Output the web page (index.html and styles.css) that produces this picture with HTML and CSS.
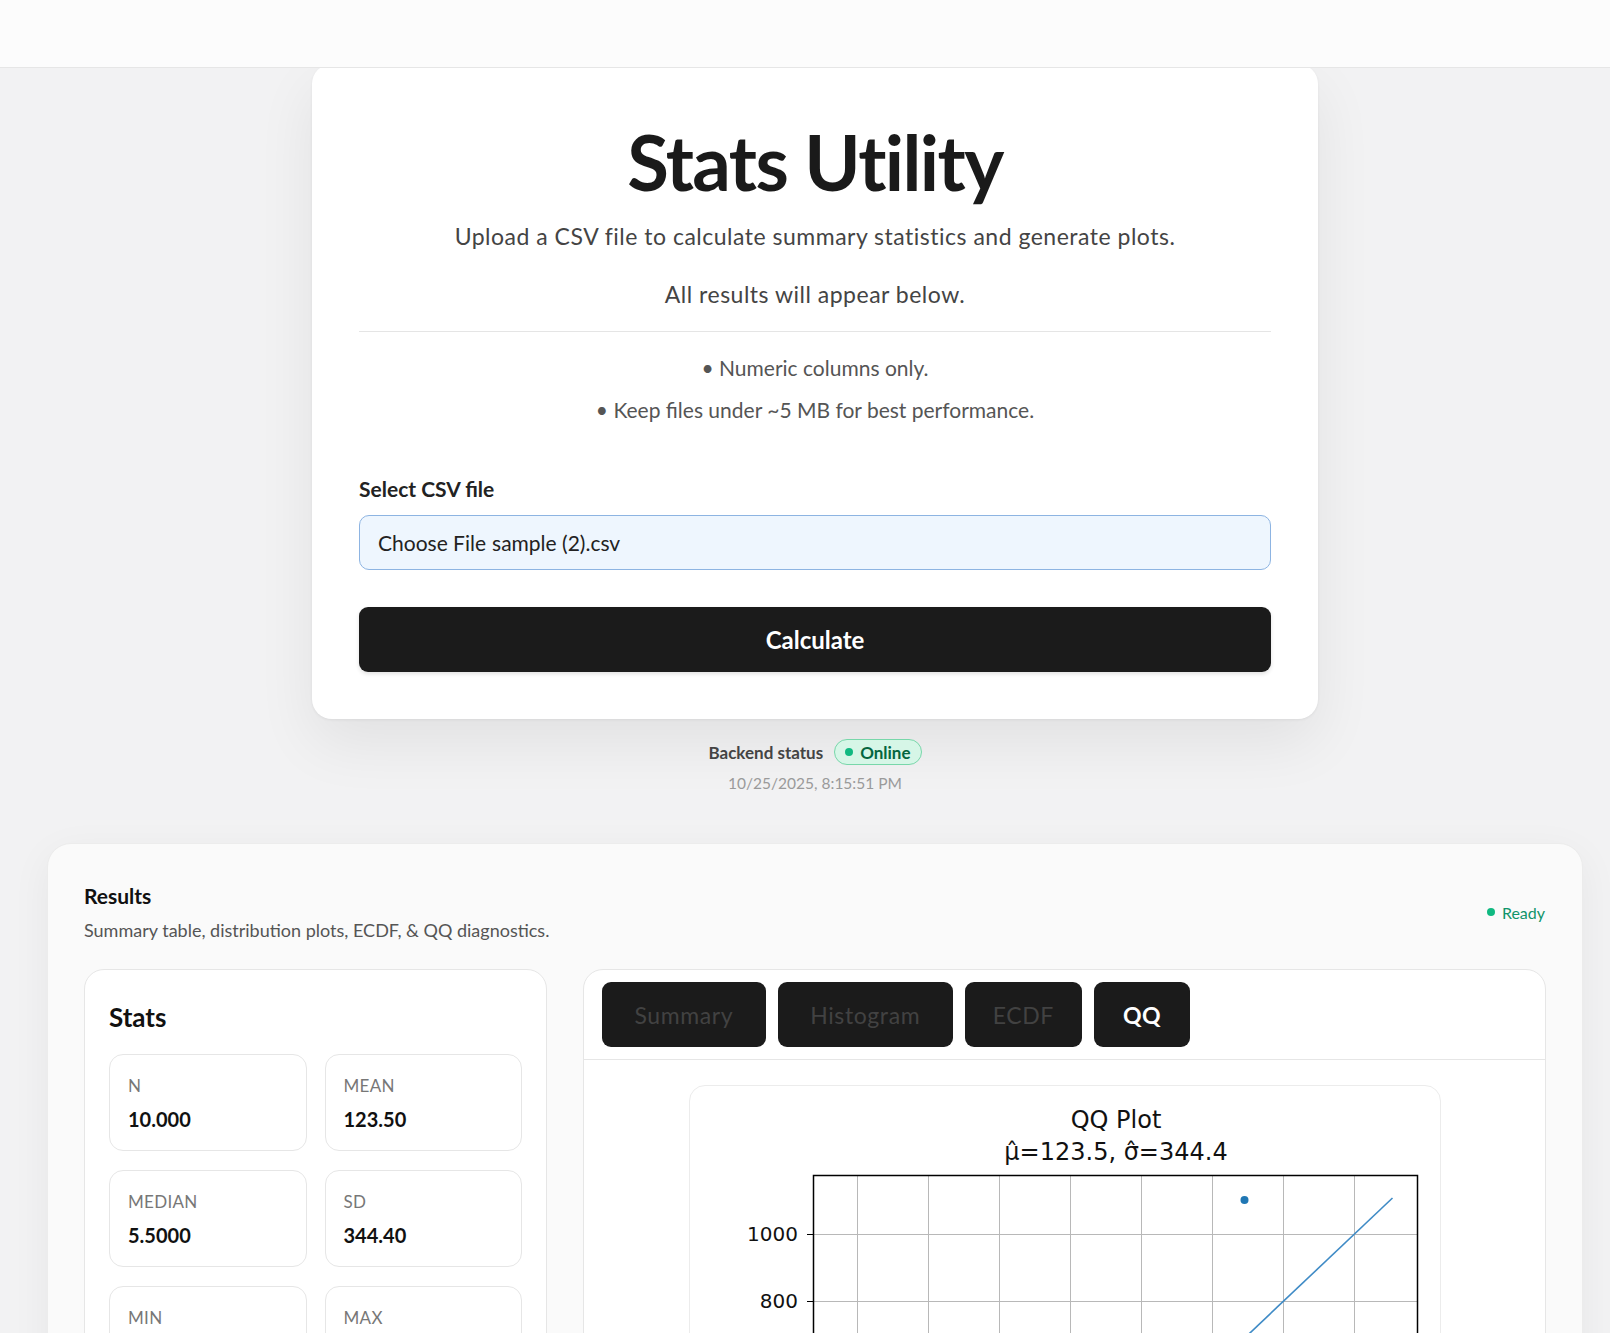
FILE: index.html
```html
<!DOCTYPE html>
<html lang="en">
<head>
<meta charset="utf-8">
<title>Stats Utility</title>
<link rel="stylesheet" href="styles.css">
</head>
<body>
<header class="topbar"></header>
<main class="page">
  <section class="hero-card">
    <h1 class="hero-title">Stats Utility</h1>
    <p class="hero-sub">Upload a CSV file to calculate summary statistics and generate plots.</p>
    <p class="hero-sub hero-sub-last">All results will appear below.</p>
    <hr class="divider">
    <ul class="notes">
      <li>• Numeric columns only.</li>
      <li>• Keep files under ~5 MB for best performance.</li>
    </ul>
    <div class="field">
      <label class="field-label">Select CSV file</label>
      <div class="file-input"><span class="file-btn">Choose File</span><span class="file-name">sample (2).csv</span></div>
    </div>
    <button class="calc-btn" type="button">Calculate</button>
  </section>

  <div class="status">
    <div class="status-row">
      <span class="status-label">Backend status</span>
      <span class="pill"><span class="dot"></span>Online</span>
    </div>
    <div class="status-time">10/25/2025, 8:15:51 PM</div>
  </div>

  <section class="results">
    <div class="results-head">
      <div>
        <h2 class="results-title">Results</h2>
        <p class="results-sub">Summary table, distribution plots, ECDF, &amp; QQ diagnostics.</p>
      </div>
      <div class="ready"><span class="dot"></span>Ready</div>
    </div>

    <div class="results-grid">
      <div class="stats-card">
        <h3 class="stats-title">Stats</h3>
        <div class="tiles">
          <div class="tile"><div class="tile-label">N</div><div class="tile-value">10.000</div></div>
          <div class="tile"><div class="tile-label">Mean</div><div class="tile-value">123.50</div></div>
          <div class="tile"><div class="tile-label">Median</div><div class="tile-value">5.5000</div></div>
          <div class="tile"><div class="tile-label">SD</div><div class="tile-value">344.40</div></div>
          <div class="tile"><div class="tile-label">Min</div><div class="tile-value">1.0000</div></div>
          <div class="tile"><div class="tile-label">Max</div><div class="tile-value">1100.0</div></div>
        </div>
      </div>

      <div class="plot-card">
        <div class="tabs">
          <button class="tab" type="button">Summary</button>
          <button class="tab" type="button">Histogram</button>
          <button class="tab tab-caps" type="button">ECDF</button>
          <button class="tab tab-active" type="button">QQ</button>
        </div>
        <div class="plot-body">
          <div class="plot-frame">
            <svg class="qq" width="750" height="580" viewBox="0 0 750 580">
              <text x="426" y="42" class="mpl-title" text-anchor="middle">QQ Plot</text>
              <text x="426" y="74" class="mpl-title" text-anchor="middle">μ̂=123.5, σ̂=344.4</text>
              <g stroke="#b8b8b8" stroke-width="1">
                <line x1="167.5" y1="89" x2="167.5" y2="505"/>
                <line x1="238.5" y1="89" x2="238.5" y2="505"/>
                <line x1="309.5" y1="89" x2="309.5" y2="505"/>
                <line x1="380.5" y1="89" x2="380.5" y2="505"/>
                <line x1="451.5" y1="89" x2="451.5" y2="505"/>
                <line x1="522.5" y1="89" x2="522.5" y2="505"/>
                <line x1="593.5" y1="89" x2="593.5" y2="505"/>
                <line x1="664.5" y1="89" x2="664.5" y2="505"/>
                <line x1="123" y1="148.5" x2="728" y2="148.5"/>
                <line x1="123" y1="215.5" x2="728" y2="215.5"/>
                <line x1="123" y1="282.5" x2="728" y2="282.5"/>
                <line x1="123" y1="349.5" x2="728" y2="349.5"/>
                <line x1="123" y1="416.5" x2="728" y2="416.5"/>
                <line x1="123" y1="483.5" x2="728" y2="483.5"/>
              </g>
              <g stroke="#000" stroke-width="1">
                <line x1="117" y1="148.5" x2="123" y2="148.5"/>
                <line x1="117" y1="215.5" x2="123" y2="215.5"/>
                <line x1="117" y1="282.5" x2="123" y2="282.5"/>
                <line x1="117" y1="349.5" x2="123" y2="349.5"/>
                <line x1="117" y1="416.5" x2="123" y2="416.5"/>
                <line x1="117" y1="483.5" x2="123" y2="483.5"/>
              </g>
              <g class="mpl-tick" text-anchor="end">
                <text x="108" y="155">1000</text>
                <text x="108" y="222">800</text>
                <text x="108" y="289">600</text>
                <text x="108" y="356">400</text>
                <text x="108" y="423">200</text>
                <text x="108" y="490">0</text>
              </g>
              <line x1="702.5" y1="112" x2="318" y2="476" stroke="#3f8bc6" stroke-width="1.6"/>
              <g fill="#1f77b4">
                <circle cx="554.5" cy="114" r="4"/>
                <circle cx="167.5" cy="483" r="4"/>
                <circle cx="238.5" cy="482" r="4"/>
                <circle cx="280" cy="482" r="4"/>
                <circle cx="320" cy="481" r="4"/>
                <circle cx="360" cy="481" r="4"/>
                <circle cx="400" cy="481" r="4"/>
                <circle cx="440" cy="480" r="4"/>
                <circle cx="480" cy="480" r="4"/>
                <circle cx="520" cy="480" r="4"/>
              </g>
              <rect x="123.5" y="89.5" width="604" height="415" fill="none" stroke="#000" stroke-width="1.5"/>
            </svg>
          </div>
        </div>
      </div>
    </div>
  </section>
</main>
</body>
</html>
```

FILE: styles.css
```css
* { box-sizing: border-box; }
html, body { margin: 0; padding: 0; }
body {
  font-family: Lato, "Noto Sans", "Liberation Sans", sans-serif;
  background: #f2f2f3;
  color: #1a1a1a;
}

.topbar {
  position: sticky;
  top: 0;
  z-index: 10;
  height: 68px;
  background: #fcfcfc;
  border-bottom: 1px solid #e6e6e6;
}

.page {
  padding-left: 20px;
  padding-bottom: 60px;
}

.hero-card {
  width: 1006px;
  margin: -4px auto 0;
  background: #fff;
  border-radius: 20px;
  padding: 48px 47px 47px;
  box-shadow: 0 24px 60px rgba(0, 0, 0, 0.07), 0 1px 3px rgba(0, 0, 0, 0.06);
  text-align: center;
}

.hero-title {
  margin: 0 0 8px;
  font-size: 76px;
  line-height: 100px;
  font-weight: 700;
  color: #1a1a1a;
  letter-spacing: -1.6px;
}

.hero-sub {
  margin: 0 0 25px;
  font-size: 23px;
  line-height: 33px;
  letter-spacing: 0.5px;
  color: #444;
}
.hero-sub-last { margin-bottom: 20px; }

.divider {
  margin: 0;
  border: 0;
  border-top: 1px solid #e5e5e5;
}

.notes {
  list-style: none;
  margin: 21px 0 0;
  padding: 0;
  display: flex;
  flex-direction: column;
  gap: 12px;
  font-size: 21px;
  line-height: 30px;
  color: #555;
}

.field {
  margin-top: 49px;
  text-align: left;
}
.field-label {
  display: block;
  font-size: 21px;
  line-height: 30px;
  font-weight: 700;
  color: #222;
  margin-bottom: 11px;
}
.file-input {
  height: 55px;
  display: flex;
  align-items: center;
  gap: 6px;
  padding: 0 18px;
  background: #eef6fe;
  border: 1px solid #8db4e2;
  border-radius: 10px;
  font-size: 21px;
  color: #222;
}

.calc-btn {
  display: block;
  width: 100%;
  height: 65px;
  margin-top: 37px;
  border: 0;
  border-radius: 9px;
  background: #1b1b1b;
  color: #fff;
  font-family: inherit;
  font-size: 24px;
  font-weight: 700;
  box-shadow: 0 2px 4px rgba(0, 0, 0, 0.12);
}

.status {
  margin-top: 20px;
  display: flex;
  flex-direction: column;
  align-items: center;
  gap: 8px;
}
.status-row {
  display: flex;
  align-items: center;
  gap: 11px;
  height: 26px;
}
.status-label {
  font-size: 17px;
  font-weight: 700;
  color: #444;
}
.pill {
  display: inline-flex;
  align-items: center;
  gap: 7px;
  height: 26px;
  padding: 0 10px;
  border-radius: 13px;
  background: #d6f6e7;
  border: 1px solid #78d7aa;
  color: #05653f;
  font-size: 17px;
  font-weight: 700;
}
.dot {
  width: 8px;
  height: 8px;
  border-radius: 50%;
  background: #10b981;
  display: inline-block;
}
.status-time {
  font-size: 15.5px;
  line-height: 20px;
  color: #9a9a9a;
}

.results {
  width: 1536px;
  margin: 50px auto 0;
  background: #fafafa;
  border: 1px solid #ececec;
  border-radius: 24px;
  padding: 38px 36px 36px;
  box-shadow: 0 10px 40px rgba(0, 0, 0, 0.05);
}
.results-head {
  display: flex;
  align-items: center;
  justify-content: space-between;
}
.results-title {
  margin: 0 0 8px;
  font-size: 21px;
  line-height: 28px;
  font-weight: 700;
  color: #111;
}
.results-sub {
  margin: 0;
  font-size: 18px;
  line-height: 24px;
  color: #555;
}
.ready {
  display: flex;
  align-items: center;
  gap: 7px;
  font-size: 16px;
  color: #10946a;
  margin-right: 1px;
}

.results-grid {
  margin-top: 27px;
  display: grid;
  grid-template-columns: 463px 1fr;
  gap: 36px;
  align-items: start;
}

.stats-card {
  background: #fff;
  border: 1px solid #e6e6e6;
  border-radius: 20px;
  padding: 30px 24px 24px;
}
.stats-title {
  margin: 0 0 20px;
  font-size: 26px;
  line-height: 34px;
  font-weight: 700;
  color: #111;
}
.tiles {
  display: grid;
  grid-template-columns: 1fr 1fr;
  gap: 19px 18px;
}
.tile {
  height: 97px;
  border: 1px solid #e6e6e6;
  border-radius: 14px;
  padding: 19px 18px 18px;
  background: #fff;
}
.tile-label {
  font-size: 17px;
  line-height: 24px;
  color: #777;
  text-transform: uppercase;
  letter-spacing: 0.3px;
}
.tile-value {
  margin-top: 7px;
  font-size: 20px;
  line-height: 28px;
  font-weight: 700;
  color: #111;
}

.plot-card {
  background: #fff;
  border: 1px solid #e6e6e6;
  border-radius: 20px;
  overflow: hidden;
}
.tabs {
  display: flex;
  gap: 12px;
  padding: 12px 18px 12px;
  border-bottom: 1px solid #e6e6e6;
}
.tab {
  height: 65px;
  padding: 0 32.5px;
  border: 0;
  border-radius: 9px;
  background: #1b1b1b;
  color: #424242;
  font-family: inherit;
  font-size: 23px;
  letter-spacing: 0.6px;
}
.tab-caps {
  padding: 0 28px;
}
.tab-active {
  color: #fff;
  font-weight: 700;
  padding: 0 29px;
}
.plot-body {
  padding: 25px 0 30px;
  display: flex;
  justify-content: center;
}
.plot-frame {
  width: 752px;
  border: 1px solid #ececec;
  border-radius: 16px;
  background: #fff;
  overflow: hidden;
}
.qq { display: block; }
.mpl-title {
  font-family: "DejaVu Sans", sans-serif;
  font-size: 24px;
  fill: #111;
}
.mpl-tick {
  font-family: "DejaVu Sans", sans-serif;
  font-size: 20px;
  fill: #111;
}
```
